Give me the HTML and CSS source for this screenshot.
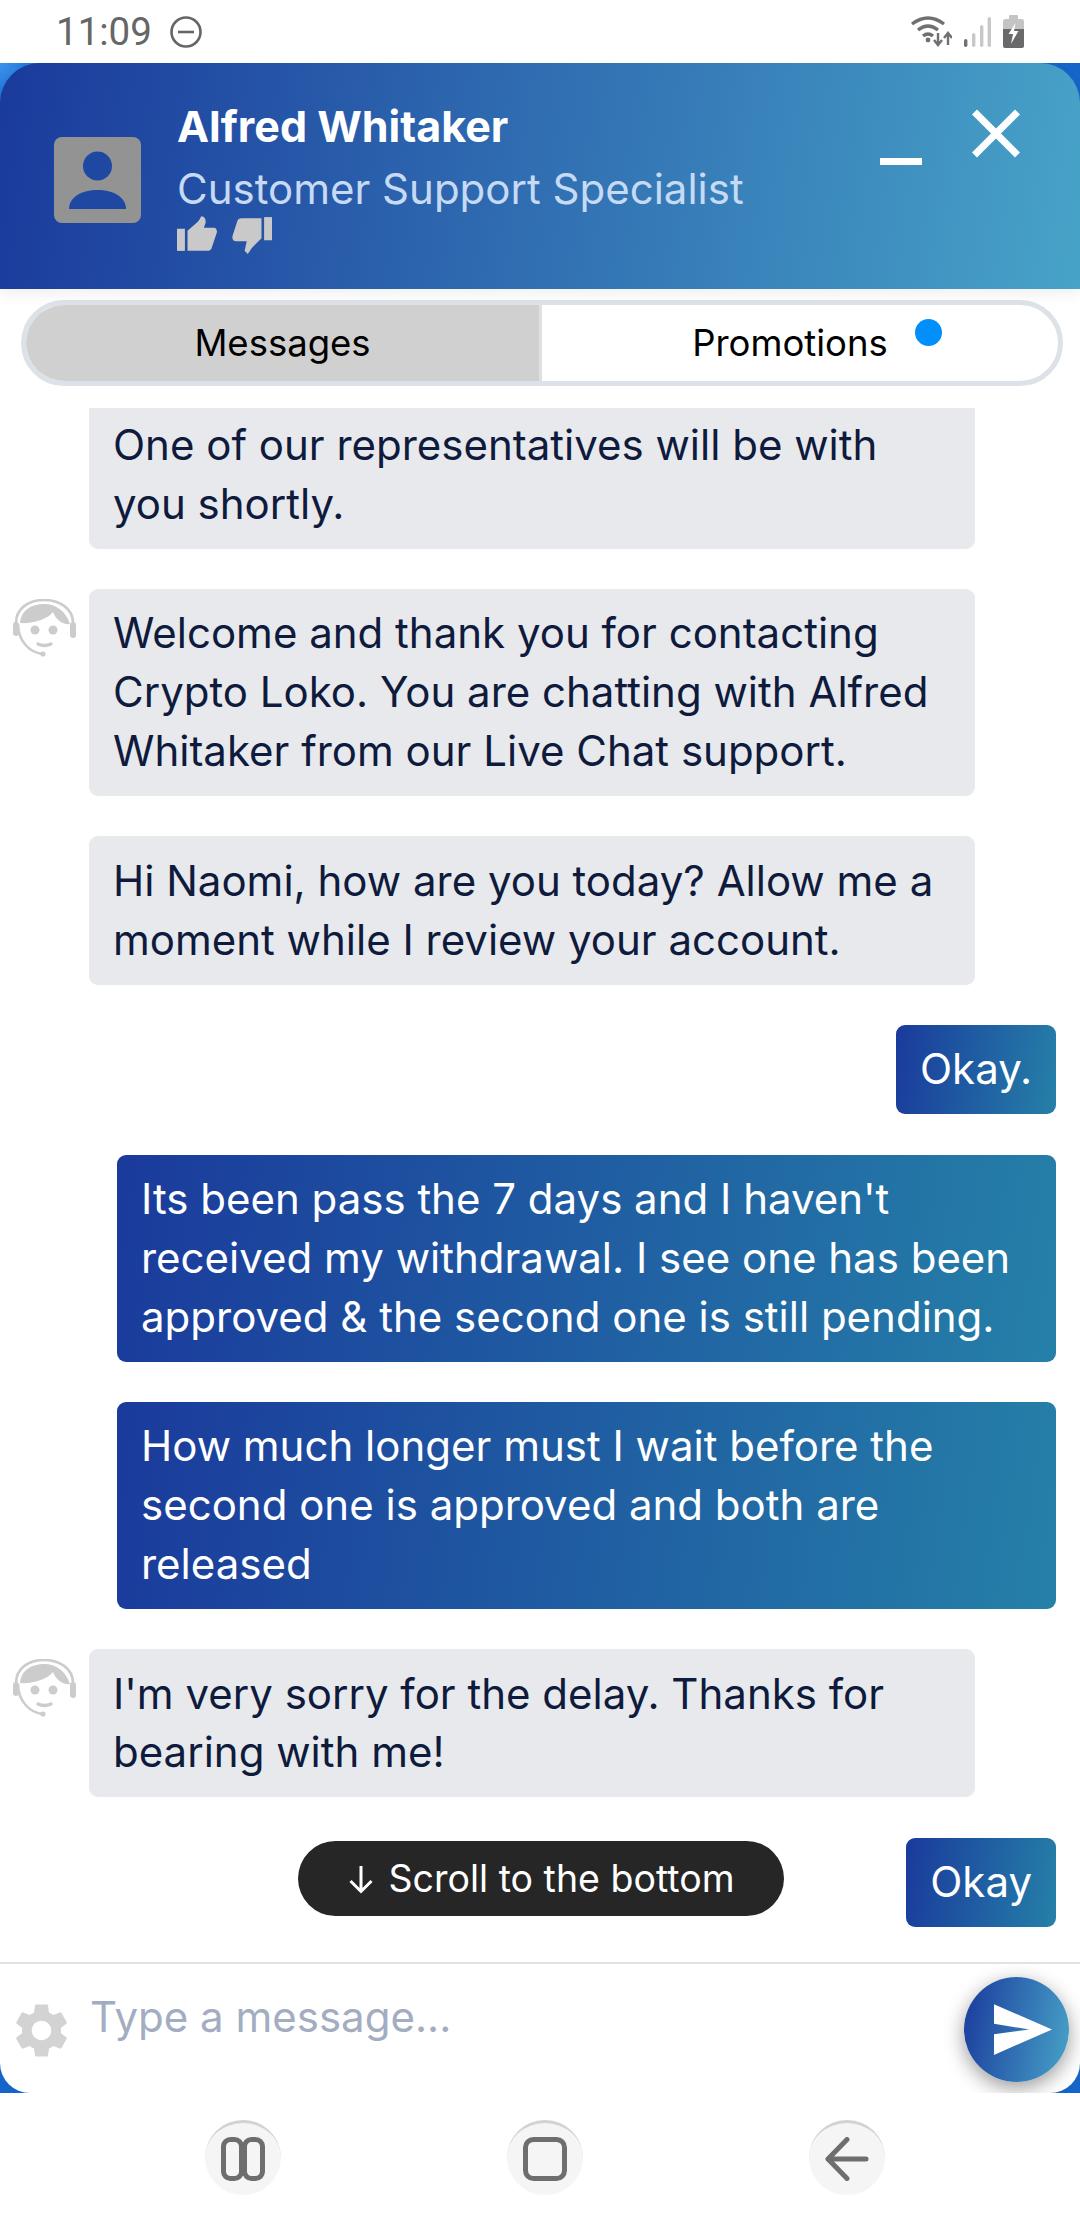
FILE: index.html
```html
<!DOCTYPE html>
<html lang="en">
<head>
    <meta charset="UTF-8">
    <meta name="viewport" content="width=device-width, initial-scale=1.0">
    <title>Live Chat</title>
    <link rel="stylesheet" href="styles.css">
</head>
<body>
    <div class="status-bar">
        <div class="status-left">
            <span class="status-time">11:09</span>
            <svg class="status-dnd" width="32" height="32" viewBox="0 0 32 32"><circle cx="16" cy="16" r="14.5" fill="none" stroke="#666" stroke-width="2.6"/><rect x="8" y="14.7" width="16" height="2.6" fill="#666"/></svg>
        </div>
        <div class="status-right">
            <svg width="42" height="33" viewBox="0 0 42 33"><path d="M2 9 Q18 -3 34 9" fill="none" stroke="#707070" stroke-width="3.4"/><path d="M8 15 Q18 7 28 15" fill="none" stroke="#707070" stroke-width="3.4"/><path d="M13 21 Q18 17 23 21" fill="none" stroke="#707070" stroke-width="3.4"/><circle cx="18" cy="25" r="2.4" fill="#707070"/><path d="M28 18 V29 M24 25 L28 30 L32 25" fill="none" stroke="#707070" stroke-width="2.4"/><path d="M38 30 V19 M34 23 L38 18 L42 23" fill="none" stroke="#707070" stroke-width="2.4"/></svg>
            <svg width="27" height="30" viewBox="0 0 27 30"><rect x="0" y="22" width="3.4" height="8" rx="1.7" fill="#707070"/><rect x="8" y="16" width="3.4" height="14" rx="1.7" fill="#c8c8c8"/><rect x="16" y="8" width="3.4" height="22" rx="1.7" fill="#c8c8c8"/><rect x="23.6" y="0" width="3.4" height="30" rx="1.7" fill="#c8c8c8"/></svg>
            <svg width="21" height="33" viewBox="0 0 21 33"><rect x="6" y="0" width="9" height="5" rx="1" fill="#c4c4c4"/><rect x="0" y="4" width="21" height="29" rx="2.5" fill="#c4c4c4"/><path d="M0 14 H21 V30.5 a2.5 2.5 0 0 1 -2.5 2.5 H2.5 a2.5 2.5 0 0 1 -2.5 -2.5 Z" fill="#6a6a6a"/><path d="M12.5 8 L5.5 19 H10 L8 29 L15.5 16 H11 Z" fill="#fff"/></svg>
        </div>
    </div>

    <div class="app">
        <div class="header">
            <div class="agent-photo">
                <svg width="57" height="60" viewBox="0 0 57 60"><circle cx="28.5" cy="15" r="14.5" fill="#1f48a2"/><path d="M0 58 C0 46 13 39 28.5 39 C44 39 57 46 57 58 Z" fill="#1f48a2"/></svg>
            </div>
            <div class="agent-info">
                <div class="agent-name">Alfred Whitaker</div>
                <div class="agent-role">Customer Support Specialist</div>
                <div class="agent-rating">
                    <svg width="40" height="35" viewBox="0 0 38 33"><rect x="0" y="12" width="7.5" height="21" fill="#c9c9c9"/><path d="M10 14 L19 6 C21 4 22 2 23 0 C26 0 28 3 27 7 L25.5 11 H35 C37 11 38 13 38 15 L33 30 C32.5 32 31 33 29 33 H10 Z" fill="#c9c9c9"/></svg>
                    <svg width="40" height="38" viewBox="0 0 38 36"><rect x="30.5" y="1" width="7.5" height="22" fill="#c9c9c9"/><path d="M28 21 L19 30 L15 36 L12 33 L14 24 H4 C1 24 0 22 0.5 19 L5 5 C5.5 3 7 2 9 2 H28 Z" fill="#c9c9c9"/></svg>
                </div>
            </div>
            <div class="header-actions">
                <div class="minimize-btn"></div>
                <svg class="close-btn" width="48" height="49" viewBox="0 0 48 49"><path d="M2.5 3 L45.5 46 M45.5 3 L2.5 46" stroke="#fff" stroke-width="7" fill="none"/></svg>
            </div>
        </div>

        <div class="panel">
            <div class="tabs">
                <div class="tab tab-active">Messages</div>
                <div class="tab tab-promo">Promotions<span class="tab-dot"></span></div>
            </div>

            <div class="messages">
                <div class="row">
                    <div class="avatar"></div>
                    <div class="bubble bubble-cut">One of our representatives will be with you shortly.</div>
                </div>
                <div class="row">
                    <div class="avatar">
                        <svg width="64" height="58" viewBox="0 0 64 58"><path d="M3 24 C3 9 16 1 31 1 C46 1 60 9 60 24" fill="none" stroke="#ccc" stroke-width="2.6"/><path d="M5 25 C5 42 17 54 30 55" fill="none" stroke="#ccc" stroke-width="2.6"/><path d="M7 24 C8 11 19 5 31 5 C43 5 53 12 57 25 C50 26 43 21 40 13 C35 20 20 25 7 24 Z" fill="#ccc"/><circle cx="22" cy="31" r="4.5" fill="#ccc"/><circle cx="40" cy="31" r="4.5" fill="#ccc"/><path d="M25 45 Q31 48 38 45" fill="none" stroke="#ccc" stroke-width="3.4" stroke-linecap="round"/><rect x="0" y="23" width="6" height="14" rx="3" fill="#ccc"/><rect x="57" y="23" width="6" height="16" rx="3" fill="#ccc"/><circle cx="30" cy="55" r="2.6" fill="#ccc"/></svg>
                    </div>
                    <div class="bubble">Welcome and thank you for contacting Crypto Loko. You are chatting with Alfred Whitaker from our Live Chat support.</div>
                </div>
                <div class="row">
                    <div class="avatar"></div>
                    <div class="bubble">Hi Naomi, how are you today? Allow me a moment while I review your account.</div>
                </div>
                <div class="row row-mine">
                    <div class="bubble bubble-mine">Okay.</div>
                </div>
                <div class="row row-mine">
                    <div class="bubble bubble-mine bubble-wide">Its been pass the 7 days and I haven't received my withdrawal. I see one has been approved &amp; the second one is still pending.</div>
                </div>
                <div class="row row-mine">
                    <div class="bubble bubble-mine bubble-wide">How much longer must I wait before the second one is approved and both are released</div>
                </div>
                <div class="row">
                    <div class="avatar">
                        <svg width="64" height="58" viewBox="0 0 64 58"><path d="M3 24 C3 9 16 1 31 1 C46 1 60 9 60 24" fill="none" stroke="#ccc" stroke-width="2.6"/><path d="M5 25 C5 42 17 54 30 55" fill="none" stroke="#ccc" stroke-width="2.6"/><path d="M7 24 C8 11 19 5 31 5 C43 5 53 12 57 25 C50 26 43 21 40 13 C35 20 20 25 7 24 Z" fill="#ccc"/><circle cx="22" cy="31" r="4.5" fill="#ccc"/><circle cx="40" cy="31" r="4.5" fill="#ccc"/><path d="M25 45 Q31 48 38 45" fill="none" stroke="#ccc" stroke-width="3.4" stroke-linecap="round"/><rect x="0" y="23" width="6" height="14" rx="3" fill="#ccc"/><rect x="57" y="23" width="6" height="16" rx="3" fill="#ccc"/><circle cx="30" cy="55" r="2.6" fill="#ccc"/></svg>
                    </div>
                    <div class="bubble">I'm very sorry for the delay. Thanks for bearing with me!</div>
                </div>
                <div class="row row-mine">
                    <div class="bubble bubble-mine">Okay</div>
                </div>
            </div>

            <div class="scroll-pill">
                <svg width="26" height="30" viewBox="0 0 26 30"><path d="M13 2 V27 M2.5 17 L13 27.5 L23.5 17" fill="none" stroke="#fff" stroke-width="3"/></svg>
                <span>Scroll to the bottom</span>
            </div>

            <div class="compose">
                <svg class="gear" width="65" height="65" viewBox="0 0 24 24"><path fill="#d3d3d3" d="M19.14 12.94c.04-.3.06-.61.06-.94 0-.32-.02-.64-.07-.94l2.03-1.58c.18-.14.23-.41.12-.61l-1.92-3.32c-.12-.22-.37-.29-.59-.22l-2.39.96c-.5-.38-1.03-.7-1.62-.94l-.36-2.54c-.04-.24-.24-.41-.48-.41h-3.84c-.24 0-.43.17-.47.41l-.36 2.54c-.59.24-1.13.57-1.62.94l-2.39-.96c-.22-.08-.47 0-.59.22L2.74 8.87c-.12.21-.08.47.12.61l2.03 1.58c-.05.3-.09.63-.09.94s.02.64.07.94l-2.03 1.58c-.18.14-.23.41-.12.61l1.92 3.32c.12.22.37.29.59.22l2.39-.96c.5.38 1.03.7 1.62.94l.36 2.54c.05.24.24.41.48.41h3.84c.24 0 .44-.17.47-.41l.36-2.54c.59-.24 1.13-.56 1.62-.94l2.39.96c.22.08.47 0 .59-.22l1.92-3.32c.12-.22.07-.47-.12-.61l-2.01-1.58zM12 15.6c-1.98 0-3.6-1.62-3.6-3.6s1.62-3.6 3.6-3.6 3.6 1.62 3.6 3.6-1.62 3.6-3.6 3.6z"/></svg>
                <div class="placeholder">Type a message...</div>
                <div class="send-btn">
                    <svg width="58" height="51" viewBox="0 0 56 49"><polygon points="0,0 56,24.5 0,49 0,29 34,24.5 0,19" fill="#fff"/></svg>
                </div>
            </div>
        </div>
    </div>

    <div class="nav-bar">
        <div class="nav-btn">
            <svg width="44" height="44" viewBox="0 0 44 44"><rect x="2.5" y="2.5" width="18" height="39" rx="7" fill="none" stroke="#6e6e6e" stroke-width="5"/><rect x="23.5" y="2.5" width="18" height="39" rx="7" fill="none" stroke="#6e6e6e" stroke-width="5"/></svg>
        </div>
        <div class="nav-btn">
            <svg width="44" height="44" viewBox="0 0 44 44"><rect x="2.5" y="2.5" width="39" height="39" rx="8" fill="none" stroke="#6e6e6e" stroke-width="5"/></svg>
        </div>
        <div class="nav-btn">
            <svg width="44" height="44" viewBox="0 0 44 44"><path d="M22 2.5 L3 22 L22 41.5 M3 22 H41" fill="none" stroke="#6e6e6e" stroke-width="5" stroke-linecap="round" stroke-linejoin="round"/></svg>
        </div>
    </div>
</body>
</html>
```

FILE: styles.css
```css
* {
    box-sizing: border-box;
}

html, body {
    margin: 0;
    padding: 0;
}

body {
    width: 1080px;
    height: 2220px;
    overflow: hidden;
    background-color: #FFFFFF;
    font-family: 'Inter', sans-serif;
    display: flex;
    flex-direction: column;
}

.status-bar {
    height: 63px;
    display: flex;
    justify-content: space-between;
    align-items: center;
    padding: 0 56px 0 56px;
}

.status-left {
    display: flex;
    align-items: center;
    gap: 18px;
}

.status-time {
    font-family: 'Roboto', sans-serif;
    font-size: 38.5px;
    color: #666;
}

.status-right {
    display: flex;
    align-items: center;
    gap: 12px;
}

.app {
    height: 2030px;
    display: flex;
    flex-direction: column;
    background: radial-gradient(circle 50px at 0 0, #3a93ec, #1565C8);
}

.header {
    height: 226px;
    flex: none;
    display: flex;
    align-items: flex-start;
    padding: 43px 60px 0 54px;
    border-radius: 40px 40px 0 0;
    background: linear-gradient(98deg, #1A3A9C 0%, #47A3C8 100%);
    position: relative;
    z-index: 2;
    box-shadow: 0 6px 14px rgba(0, 0, 0, 0.06);
}

.agent-photo {
    width: 87px;
    height: 86px;
    margin-top: 31px;
    background-color: #939393;
    border-radius: 8px;
    display: flex;
    justify-content: center;
    padding-top: 14px;
}

.agent-info {
    margin-left: 36px;
    flex: 1;
}

.agent-name {
    font-size: 43px;
    font-weight: 700;
    line-height: 40px;
    color: #FFFFFF;
}

.agent-role {
    font-size: 42px;
    line-height: 46px;
    color: #C6DAF3;
    margin-top: 20px;
}

.agent-rating {
    display: flex;
    gap: 15px;
    margin-top: 4px;
    align-items: flex-start;
}

.header-actions {
    display: flex;
    align-items: flex-start;
    padding-top: 3px;
}

.minimize-btn {
    width: 42px;
    height: 7px;
    background-color: #FFFFFF;
    margin-top: 49px;
    margin-right: 50px;
}

.panel {
    flex: 1;
    min-height: 0;
    display: flex;
    flex-direction: column;
    background-color: #FFFFFF;
    border-radius: 0 0 30px 30px;
    position: relative;
    overflow: hidden;
}

.tabs {
    flex: none;
    height: 86px;
    margin: 11px 17px 0 21px;
    display: flex;
    border: 5px solid #DDE1E8;
    border-radius: 43px;
    overflow: hidden;
}

.tab {
    width: 50%;
    flex: none;
    display: flex;
    align-items: center;
    justify-content: center;
    position: relative;
    font-size: 36.5px;
    color: #000;
}

.tab-active {
    background-color: #D0D0D0;
    border-right: 3px solid #E0E0E0;
}

.tab-promo {
    padding-right: 20px;
}

.tab-dot {
    width: 27px;
    height: 27px;
    border-radius: 50%;
    background-color: #008FFB;
    position: absolute;
    top: 14px;
    right: 116px;
}

.messages {
    flex: 1;
    min-height: 0;
    margin-top: 22px;
    padding: 0 24px 0 13px;
    display: flex;
    flex-direction: column;
    gap: 40.3px;
}

.row {
    display: flex;
    align-items: flex-start;
}

.row-mine {
    justify-content: flex-end;
}

.avatar {
    width: 64px;
    margin-right: 12px;
    flex: none;
    padding-top: 10px;
}

.bubble {
    width: 886px;
    padding: 15.3px 24px;
    background-color: #E8E9EC;
    border-radius: 9px;
    color: #0F1B3D;
    font-size: 42px;
    line-height: 58.8px;
}

.bubble-cut {
    padding-top: 8px;
    border-radius: 0 0 9px 9px;
}

.bubble-mine {
    width: auto;
    background: linear-gradient(98deg, #1A3A9C 0%, #2580A8 100%);
    color: #FFFFFF;
}

.bubble-wide {
    width: 939px;
}

.scroll-pill {
    position: absolute;
    left: 298px;
    top: 1552px;
    width: 486px;
    height: 75px;
    border-radius: 38px;
    background-color: #262626;
    color: #FFFFFF;
    font-size: 37.5px;
    display: flex;
    align-items: center;
    justify-content: center;
    gap: 15px;
}

.compose {
    flex: none;
    height: 131px;
    border-top: 2px solid #DFE3E8;
    display: flex;
    align-items: flex-start;
    padding: 0 11px 0 9px;
}

.gear {
    flex: none;
    margin-top: 34px;
}

.placeholder {
    flex: 1;
    font-size: 42px;
    line-height: 46px;
    color: #A3ADC2;
    margin: 30px 0 0 16px;
}

.send-btn {
    width: 105px;
    height: 105px;
    margin-top: 13px;
    border-radius: 50%;
    background: linear-gradient(100deg, #1A3A9C 0%, #47A3C8 100%);
    box-shadow: 0 6px 20px rgba(0, 0, 0, 0.4);
    display: flex;
    align-items: center;
    justify-content: flex-start;
    padding-left: 30px;
}

.nav-bar {
    flex: 1;
    display: flex;
    justify-content: center;
    gap: 226px;
    padding: 27px 0 0 10px;
}

.nav-btn {
    width: 76px;
    height: 75px;
    border-radius: 50%;
    background-color: #F5F5F5;
    border-top: 3px solid #D2D2D2;
    display: flex;
    align-items: center;
    justify-content: center;
}
```
